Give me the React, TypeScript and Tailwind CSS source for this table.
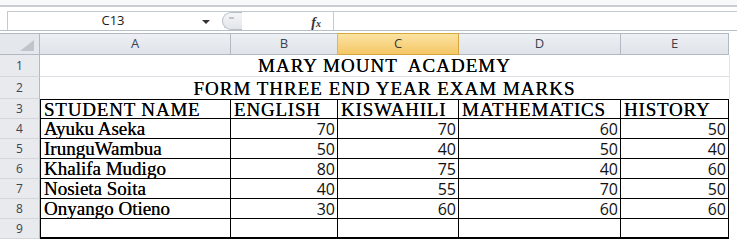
import React from 'react';

const serif = "font-['Liberation_Serif','Times_New_Roman',serif] [text-shadow:0_0_0.3px_#222]";
const sans = "font-['Open_Sans','Liberation_Sans',sans-serif]";

const cols = ['A', 'B', 'C', 'D', 'E'];

const students = [
  { name: 'Ayuku Aseka', marks: [70, 70, 60, 50] },
  { name: 'IrunguWambua', marks: [50, 40, 50, 40] },
  { name: 'Khalifa Mudigo', marks: [80, 75, 40, 60] },
  { name: 'Nosieta Soita', marks: [40, 55, 70, 50] },
  { name: 'Onyango Otieno', marks: [30, 60, 60, 60] },
];

const RowNum = ({ n, tall }: { n: number; tall?: boolean }) => (
  <div
    className={`${tall ? 'h-[22px]' : 'h-[20px]'} flex items-center justify-center bg-[#e8eaee] border-r border-b border-r-[#b3b9c2] border-b-[#d3d7dd] text-[12px] text-[#3c4350] ${sans}`}
  >
    {n}
  </div>
);

const App: React.FC = () => {
  return (
    <div className="w-[737px] h-[247px] bg-white overflow-hidden">
      {/* ribbon edge */}
      <div className="h-[7px] bg-[#f7f8fa] border-b-2 border-[#c8cdd4]" />
      <div className="h-[4px]" />

      {/* formula bar */}
      <div className="flex h-[20px] pl-[7px] border-b border-[#b8bfc8]">
        <div className={`w-[211px] relative flex items-center justify-center border-t border-l border-[#c4cad2] text-[13px] font-medium text-[#1b1b1b] ${sans}`}>
          C13
          <span className="absolute right-[8px] top-[8px] w-0 h-0 border-l-[4px] border-r-[4px] border-t-[4px] border-l-transparent border-r-transparent border-t-[#333]" />
        </div>
        <div className="w-[115px] relative flex items-center border-t border-[#c4cad2] bg-white">
          <div className="ml-[4px] w-[20px] h-[18px] rounded-l-full border-l border-t border-b border-[#b8bfc8] bg-gradient-to-b from-[#f4f5f7] to-[#e2e5ea]">
            <div className="ml-[6px] mt-[4px] w-[5px] h-[2px] bg-[#c0c5cc]" />
          </div>
          <span className="absolute right-[12px] top-[0px] italic font-bold text-[14px] text-[#333] font-['Liberation_Serif',serif]">
            f<span className="text-[10px]">x</span>
          </span>
        </div>
        <div className="flex-1 border-t border-l border-[#c4cad2]" />
      </div>
      <div className="h-[2px]" />

      {/* sheet grid */}
      <div className="grid grid-cols-[40px_191px_107px_121px_162px_108px_8px]">
        {/* column headers */}
        <div className="h-[22px] relative bg-[#e4e7ec] border-t border-r border-b border-[#b3b9c2]">
          <svg className="absolute right-[5px] bottom-[3px]" width="14" height="11" viewBox="0 0 14 11">
            <path d="M14 0 L14 11 L0 11 Z" fill="#c0c5cc" />
          </svg>
        </div>
        {cols.map((c) => (
          <div
            key={c}
            className={`h-[22px] flex items-center justify-center border-t border-r border-b text-[13px] ${sans} ${
              c === 'C'
                ? 'bg-gradient-to-b from-[#fbe3a2] to-[#f5c765] border-[#d4a83f] text-[#3b3b3b]'
                : 'bg-gradient-to-b from-[#edf0f4] to-[#dfe3e9] border-[#b3b9c2] text-[#3b4350]'
            }`}
          >
            {c}
          </div>
        ))}
        <div className="h-[22px]" />

        {/* row 1 */}
        <RowNum n={1} tall />
        <div className={`col-span-5 h-[22px] flex items-center justify-center border-b border-[#dcdfe3] text-[19px] leading-none tracking-[1px] text-black whitespace-pre ${serif}`}>
          MARY MOUNT  ACADEMY
        </div>
        <div className="h-[22px] border-l border-[#e3e5e8]" />

        {/* row 2 */}
        <RowNum n={2} tall />
        <div className={`col-span-5 h-[22px] flex items-center justify-center text-[19px] leading-none tracking-[1px] text-black ${serif}`}>
          FORM THREE END YEAR EXAM MARKS
        </div>
        <div className="h-[22px] border-l border-[#e3e5e8]" />

        {/* row 3 headings */}
        <RowNum n={3} />
        {['STUDENT NAME', 'ENGLISH', 'KISWAHILI', 'MATHEMATICS', 'HISTORY'].map((h, i) => (
          <div
            key={h}
            className={`h-[20px] flex items-center pl-[3px] border-t border-r border-b border-black text-[19px] leading-none tracking-[0.8px] text-black whitespace-nowrap overflow-hidden ${serif} ${i === 0 ? 'border-l' : ''}`}
          >
            {h}
          </div>
        ))}
        <div className="h-[20px]" />

        {/* student rows */}
        {students.map((s, r) => (
          <React.Fragment key={s.name}>
            <RowNum n={r + 4} />
            <div className={`h-[20px] flex items-center pl-[3px] border-l border-r border-b border-black text-[19px] leading-none text-black whitespace-nowrap ${serif}`}>
              {s.name}
            </div>
            {s.marks.map((m, i) => (
              <div
                key={i}
                className={`h-[20px] flex items-center justify-end pr-[2px] border-r border-b border-black text-[16px] leading-none text-[#111] ${sans}`}
              >
                {m}
              </div>
            ))}
            <div className="h-[20px]" />
          </React.Fragment>
        ))}

        {/* row 9 empty */}
        <RowNum n={9} />
        <div className="h-[20px] border-l border-r border-b-2 border-black" />
        {[0, 1, 2, 3].map((i) => (
          <div key={i} className="h-[20px] border-r border-b-2 border-black" />
        ))}
        <div className="h-[20px]" />
      </div>
    </div>
  );
};

export default App;
